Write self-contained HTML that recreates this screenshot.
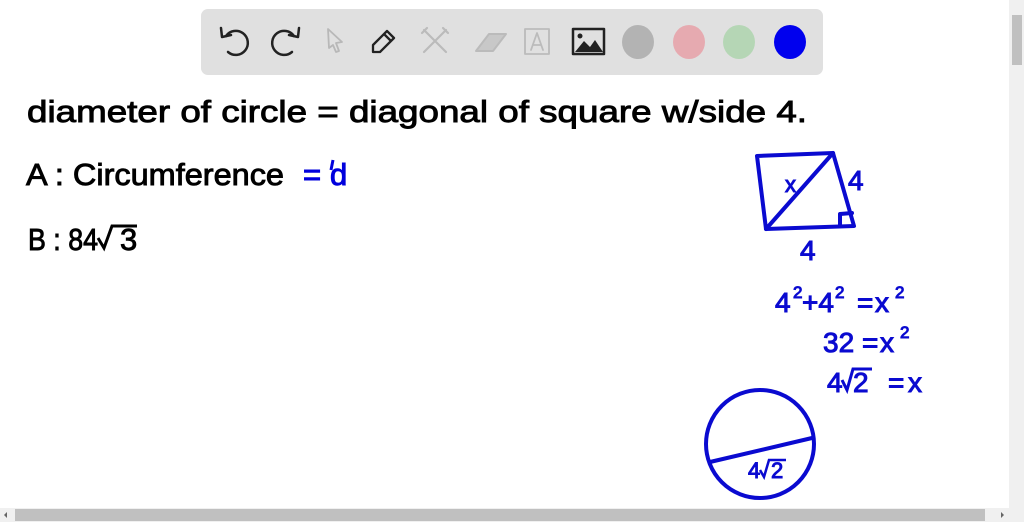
<!DOCTYPE html>
<html><head><style>
html,body{margin:0;padding:0;background:#fff;width:1024px;height:522px;overflow:hidden}
svg{display:block}
text{font-family:"Liberation Sans",sans-serif}
</style></head><body>
<svg width="1024" height="522" viewBox="0 0 1024 522">
<rect x="201" y="9" width="622" height="66" rx="7" fill="#e0e0e0"/>
<g fill="none" stroke-linecap="round" stroke-linejoin="round">
<path d="M226 36 A12 12 0 1 1 228 52" stroke="#222" stroke-width="2.5"/>
<path d="M221 28 L222 37 L231 35" stroke="#222" stroke-width="2.5"/>
<path d="M294 36 A12 12 0 1 0 292 52" stroke="#222" stroke-width="2.5"/>
<path d="M299 28 L298 37 L289 35" stroke="#222" stroke-width="2.5"/>
<path d="M328 29 L342 42 L336 43 L339 51 L336 52 L333 45 L329 48 Z" stroke="#b8b8b8" stroke-width="1.8"/>
<path d="M373 52 L373 45 L387 31 L394 38 L380 52 Z M384 34 L391 41" stroke="#222" stroke-width="2.3"/>
<path d="M424 30 L446 52 M446 30 L424 52 M422 33 L427 28 M443 28 L448 33" stroke="#bbb" stroke-width="2.2"/>
<path d="M476 51 L489 34 L506 34 L493 51 Z" stroke="#bbb" stroke-width="2" fill="#c8c8c8"/>
<rect x="525" y="29" width="24" height="25" stroke="#bbb" stroke-width="1.8"/>
<path d="M531 50 L537 33 L543 50 M533 45 L541 45" stroke="#bbb" stroke-width="1.8"/>
<rect x="573" y="29" width="31" height="25" stroke="#222" stroke-width="2.5"/>
</g>
<circle cx="580" cy="36" r="2.5" fill="#222"/>
<path d="M575 52 L584 41 L590 47 L595 40 L603 52 Z" fill="#222"/>
<ellipse cx="638" cy="42" rx="16" ry="17" fill="#b3b3b3"/>
<ellipse cx="689" cy="42" rx="16" ry="17" fill="#e6aab0"/>
<ellipse cx="739" cy="42" rx="16" ry="17" fill="#b5d6b5"/>
<ellipse cx="790" cy="42" rx="16" ry="17" fill="#0000ee"/>

<g fill="#000" stroke="#000" stroke-width="0.9" font-size="31">
<text x="27" y="122" textLength="780" lengthAdjust="spacingAndGlyphs">diameter of circle = diagonal of square w/side 4.</text>
<text x="26" y="185" textLength="258" lengthAdjust="spacingAndGlyphs">A : Circumference</text>
<text x="28" y="250" textLength="70" lengthAdjust="spacingAndGlyphs">B : 84</text>
<text x="120" y="250">3</text>
</g>
<path d="M98 238 L104 248 L112 226 L137 226" fill="none" stroke="#000" stroke-width="3"/>
<g fill="#0000dd" stroke="#0000dd" stroke-width="1" font-size="31">
<text x="303" y="185">=</text>
<text x="330" y="185">d</text>
</g>
<path d="M333 160 L331 170" stroke="#0000dd" stroke-width="3"/>

<g fill="none" stroke="#0a0ad0" stroke-width="4" stroke-linejoin="round" stroke-linecap="round">
<path d="M757 156 L833 153 L854 226 L766 229 Z"/>
<path d="M766 229 L833 153"/>
<path d="M840 225 L840 214 L852 213"/>
<circle cx="760" cy="444" r="54"/>
<path d="M710 462 L812 438"/>
</g>
<g fill="#0a0ad0" stroke="#0a0ad0" stroke-width="1" font-size="28">
<text x="785" y="192" font-size="22">x</text>
<text x="848" y="190">4</text>
<text x="800" y="260">4</text>
<text x="775" y="312">4</text><text x="793" y="298" font-size="17">2</text>
<text x="802" y="312">+4</text><text x="835" y="298" font-size="17">2</text>
<text x="857" y="312">=</text><text x="875" y="312">x</text><text x="895" y="298" font-size="17">2</text>
<text x="823" y="352">32</text><text x="862" y="352">=</text><text x="880" y="352">x</text><text x="900" y="338" font-size="17">2</text>
<text x="827" y="392">4</text><text x="853" y="392">2</text><text x="888" y="392">=</text><text x="908" y="392">x</text>
<text x="748" y="478" font-size="22">4</text><text x="771" y="478" font-size="22">2</text>
</g>
<path d="M842 380 L847 390 L853 369 L872 369" fill="none" stroke="#0a0ad0" stroke-width="3"/>
<path d="M760 470 L764 477 L769 460 L786 460" fill="none" stroke="#0a0ad0" stroke-width="2.5"/>

<rect x="1009" y="0" width="15" height="508" fill="#f0f0f0"/>
<rect x="1012" y="15" width="10" height="50" fill="#c0c0c0"/>
<rect x="0" y="508" width="1024" height="14" fill="#f0f0f0"/>
<rect x="15" y="509" width="970" height="12" fill="#c0c0c0"/>
<path d="M7 512 L4 515 L7 518 Z" fill="#666"/>
<path d="M1001 512 L1004 515 L1001 518 Z" fill="#666"/>
</svg>
</body></html>
